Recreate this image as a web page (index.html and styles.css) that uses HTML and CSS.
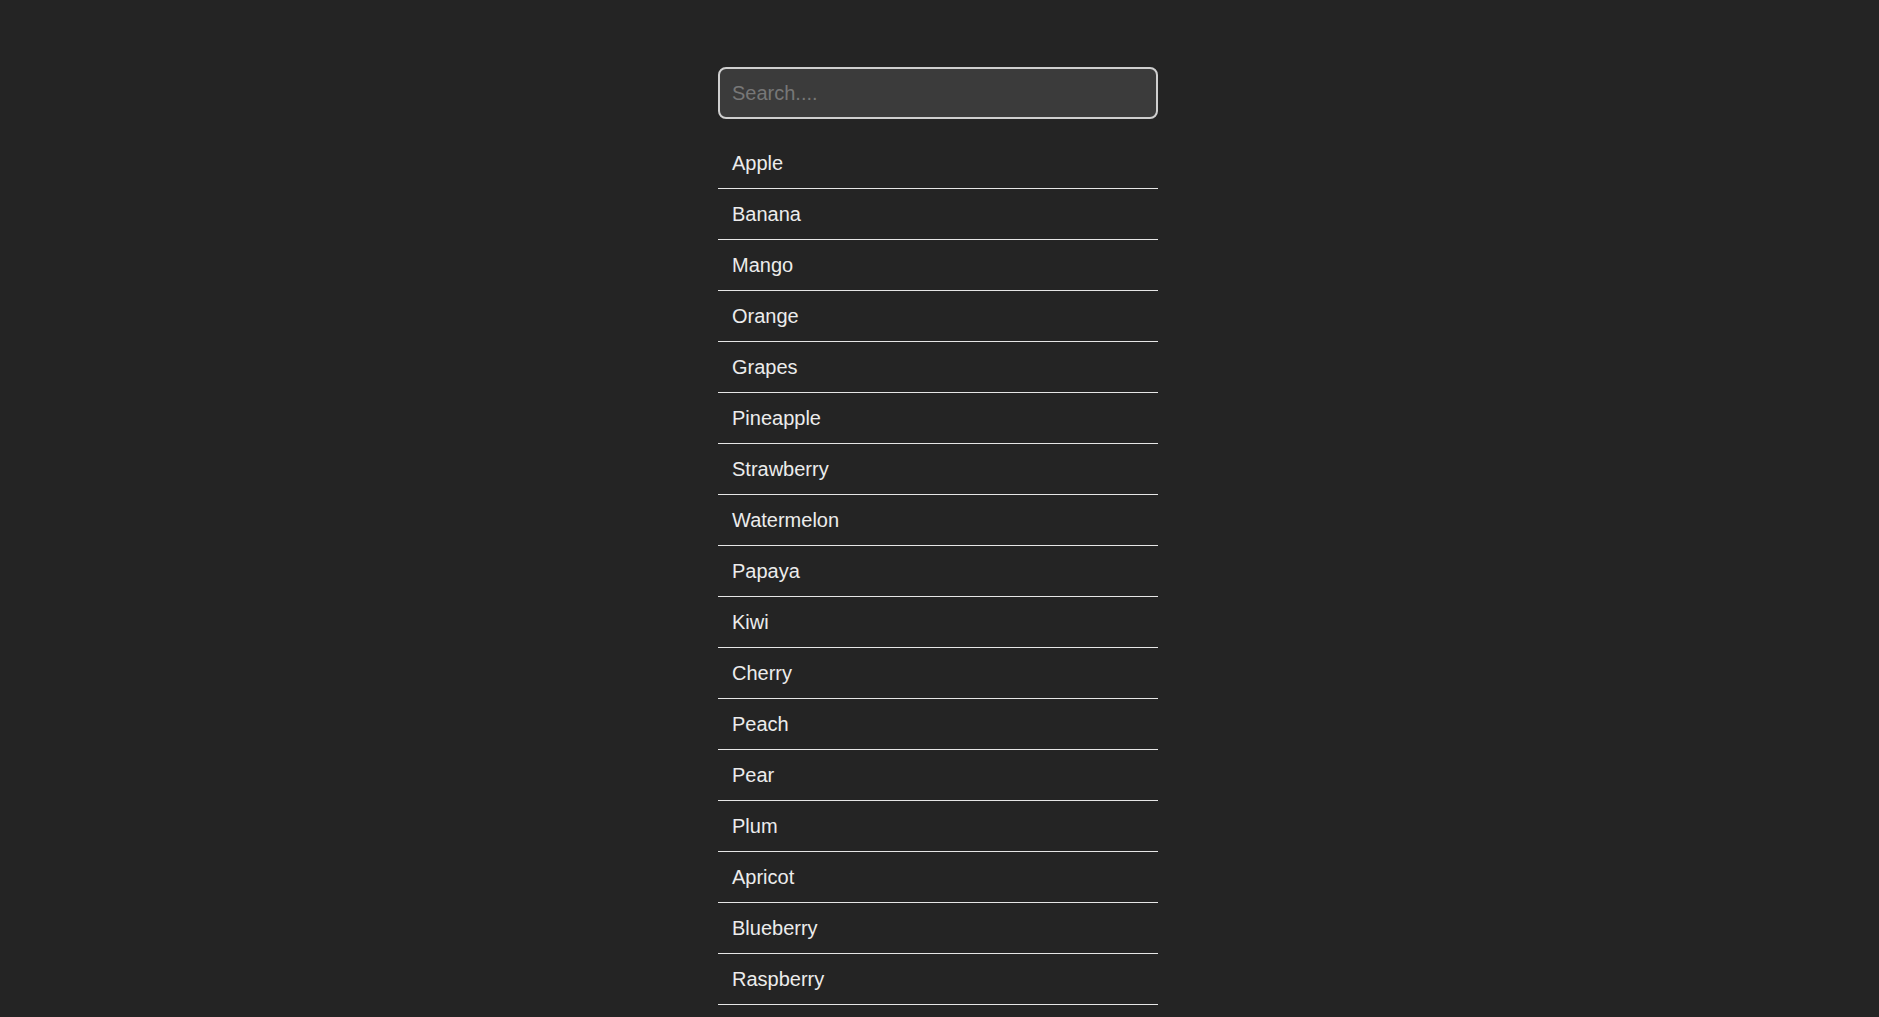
FILE: index.html
```html
<!DOCTYPE html>
<html lang="en">
<head>
<meta charset="utf-8">
<title>Fruit search</title>
<link rel="stylesheet" href="styles.css">
</head>
<body>
<main class="wrap">
  <input class="search" type="text" placeholder="Search....">
  <ul class="list">
    <li class="item">Apple</li>
    <li class="item">Banana</li>
    <li class="item">Mango</li>
    <li class="item">Orange</li>
    <li class="item">Grapes</li>
    <li class="item">Pineapple</li>
    <li class="item">Strawberry</li>
    <li class="item">Watermelon</li>
    <li class="item">Papaya</li>
    <li class="item">Kiwi</li>
    <li class="item">Cherry</li>
    <li class="item">Peach</li>
    <li class="item">Pear</li>
    <li class="item">Plum</li>
    <li class="item">Apricot</li>
    <li class="item">Blueberry</li>
    <li class="item">Raspberry</li>
  </ul>
</main>
</body>
</html>
```
FILE: styles.css
```css
html, body {
  margin: 0;
  background: #242424;
  overflow: hidden;
}
body {
  padding: 67px 3px 0 0;
  font-family: "Liberation Sans", Arial, sans-serif;
  color: #ececec;
}
.wrap {
  width: 440px;
  margin: 0 auto;
  display: flex;
  flex-direction: column;
}
.search {
  box-sizing: border-box;
  width: 100%;
  height: 52px;
  padding: 0 12px;
  border: 2px solid #cfcfcf;
  border-radius: 8px;
  background: #3b3b3b;
  color: #ececec;
  font-family: "Liberation Sans", Arial, sans-serif;
  font-size: 20px;
  outline: none;
}
.search::placeholder {
  color: #777;
}
.list {
  list-style: none;
  margin: 19px 0 0;
  padding: 0;
}
.item {
  padding: 14px 14px 13px;
  font-size: 20px;
  line-height: 23px;
  border-bottom: 1px solid #e6e6e6;
}
```
